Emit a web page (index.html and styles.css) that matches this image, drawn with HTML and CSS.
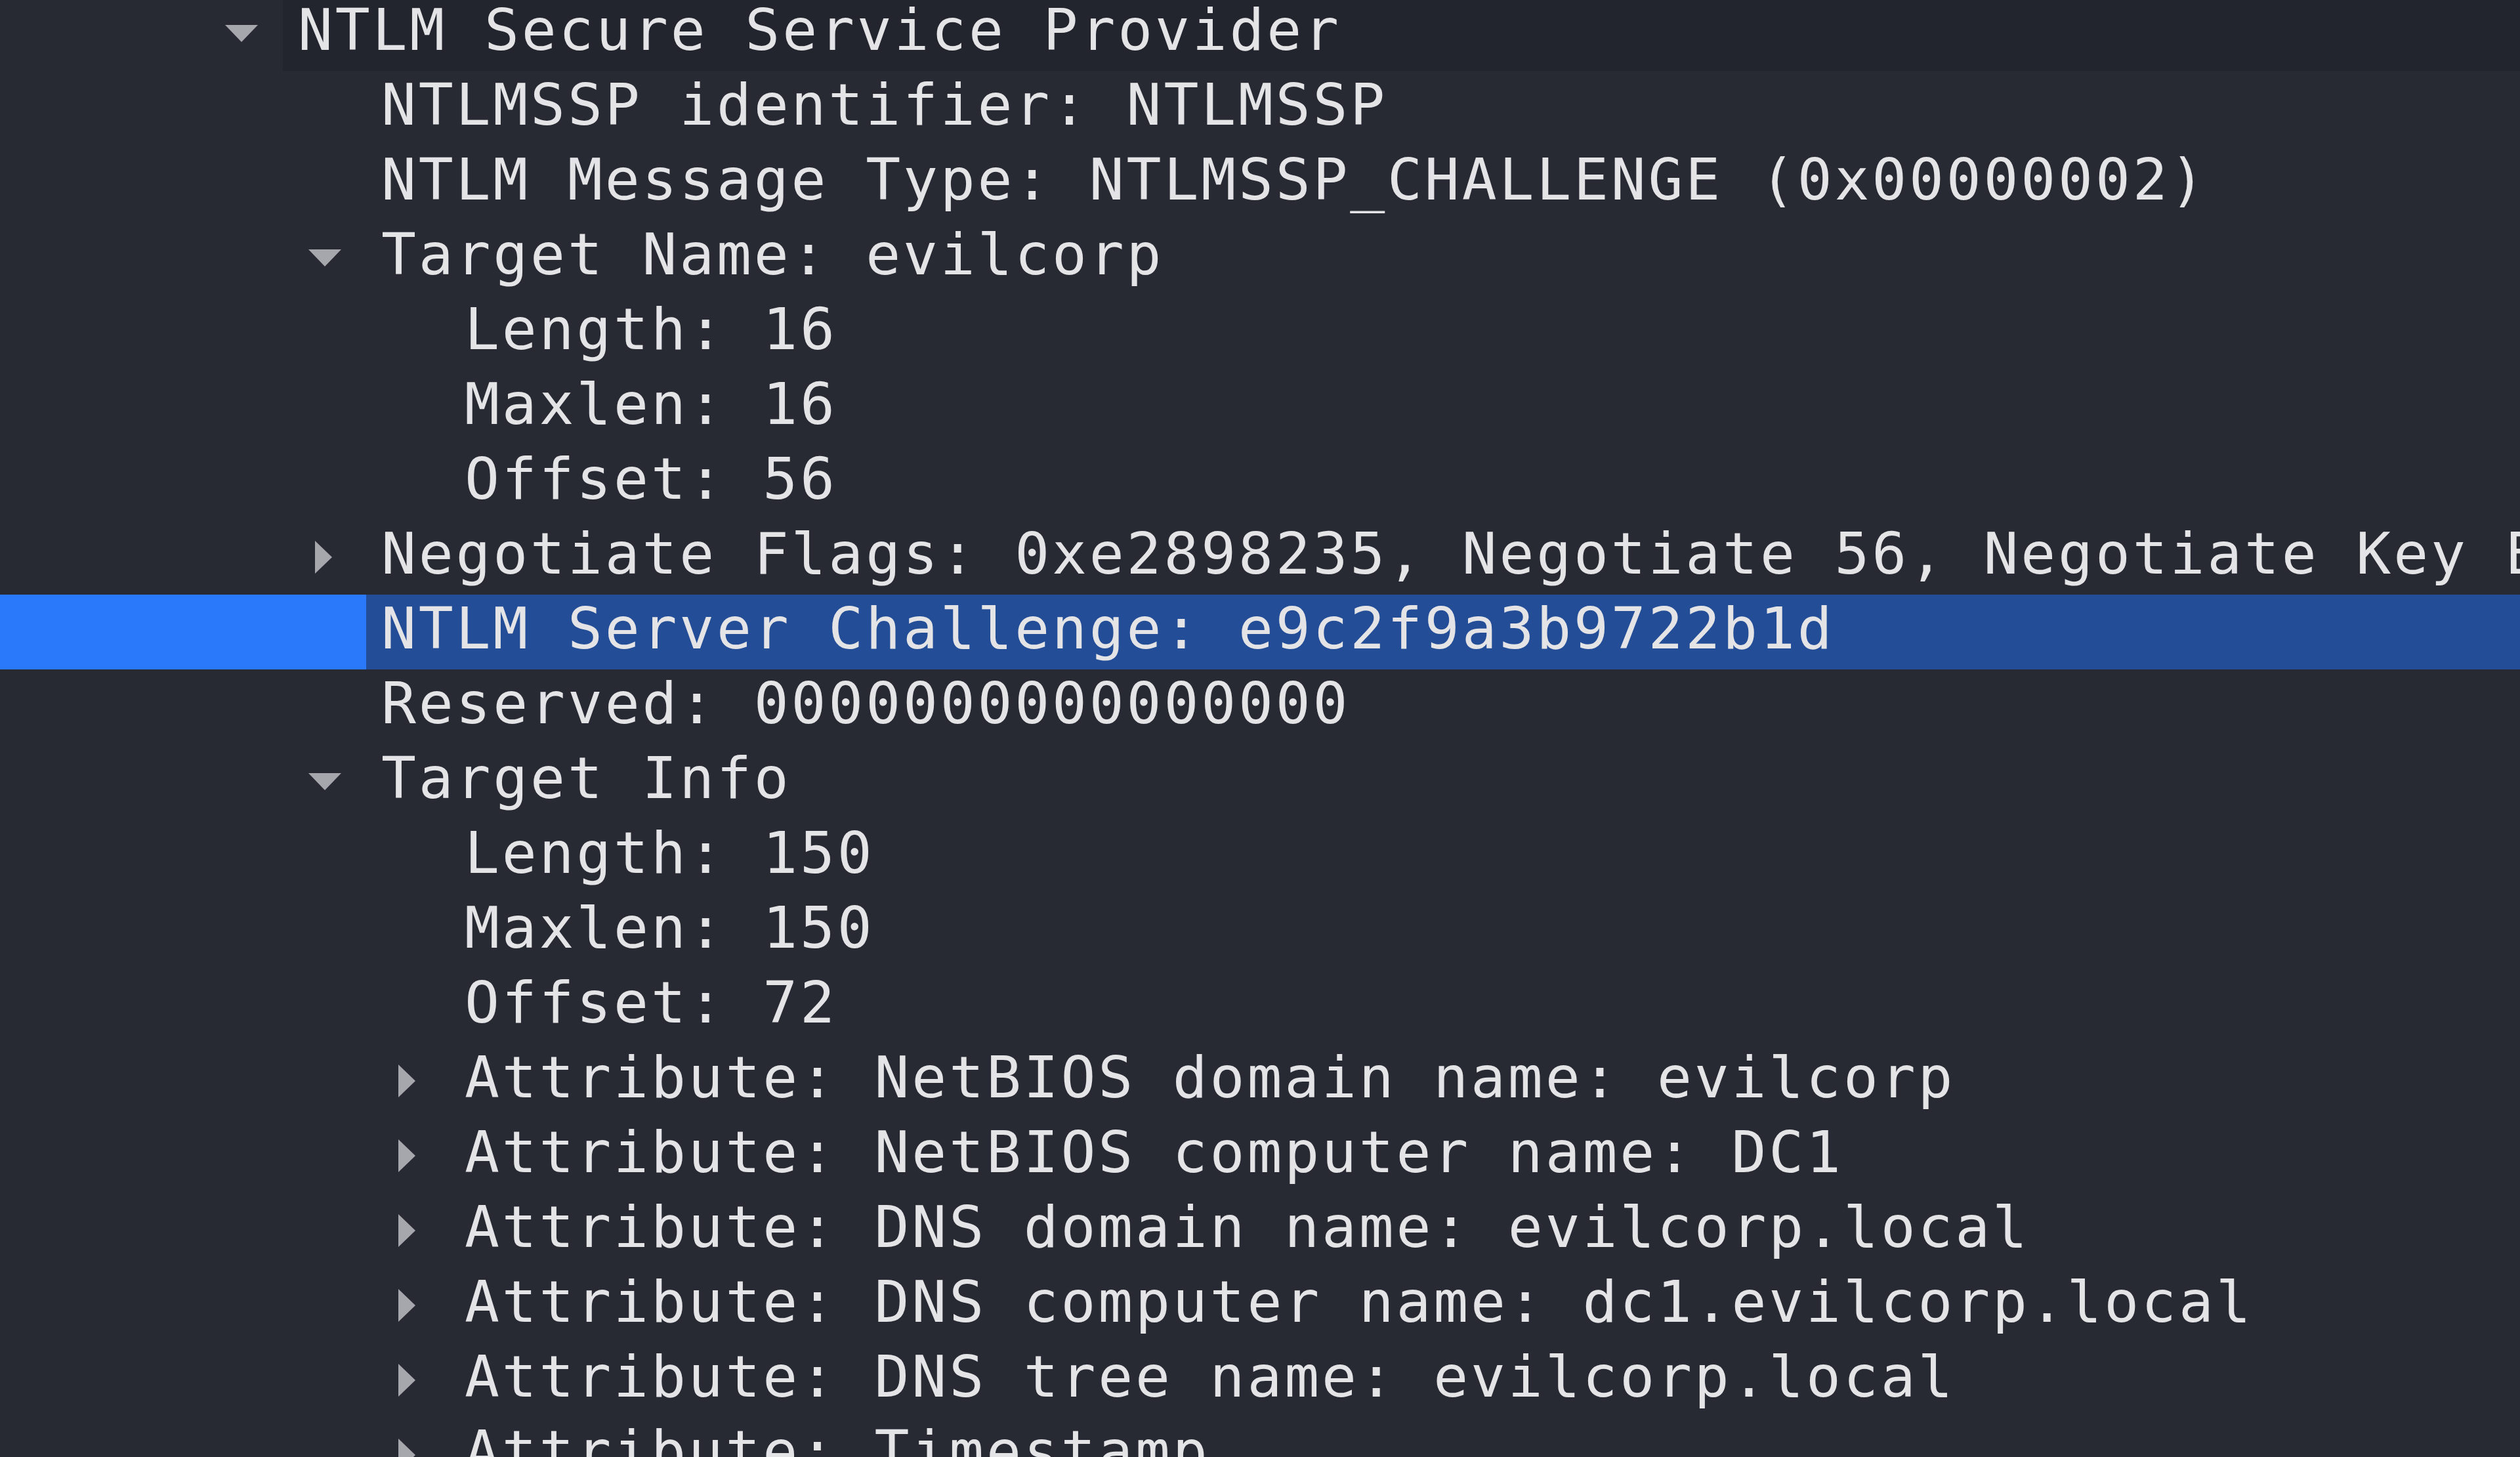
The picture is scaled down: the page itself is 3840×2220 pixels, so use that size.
FILE: index.html
```html
<!DOCTYPE html>
<html lang="en">
<head>
    <meta charset="UTF-8">
    <meta name="viewport" content="width=device-width, initial-scale=1.0">
    <title>Packet Details</title>
    <link rel="stylesheet" href="styles.css">
</head>
<body>
    <div class="tree">
        <div class="row level-0 current">
            <span class="indent"></span>
            <span class="branch"><svg class="arrow-down" viewBox="0 0 50 26"><polygon points="0,0 50,0 25,26"/></svg></span>
            <span class="label">NTLM Secure Service Provider</span>
        </div>
        <div class="row level-1">
            <span class="indent"></span>
            <span class="branch"></span>
            <span class="label">NTLMSSP identifier: NTLMSSP</span>
        </div>
        <div class="row level-1">
            <span class="indent"></span>
            <span class="branch"></span>
            <span class="label">NTLM Message Type: NTLMSSP_CHALLENGE (0x00000002)</span>
        </div>
        <div class="row level-1">
            <span class="indent"></span>
            <span class="branch"><svg class="arrow-down" viewBox="0 0 50 26"><polygon points="0,0 50,0 25,26"/></svg></span>
            <span class="label">Target Name: evilcorp</span>
        </div>
        <div class="row level-2">
            <span class="indent"></span>
            <span class="branch"></span>
            <span class="label">Length: 16</span>
        </div>
        <div class="row level-2">
            <span class="indent"></span>
            <span class="branch"></span>
            <span class="label">Maxlen: 16</span>
        </div>
        <div class="row level-2">
            <span class="indent"></span>
            <span class="branch"></span>
            <span class="label">Offset: 56</span>
        </div>
        <div class="row level-1">
            <span class="indent"></span>
            <span class="branch"><svg class="arrow-right" viewBox="0 0 26 50"><polygon points="0,0 26,25 0,50"/></svg></span>
            <span class="label">Negotiate Flags: 0xe2898235, Negotiate 56, Negotiate Key Exchange, Negotiate 128, Negotiate Version, Negotiate Target Info</span>
        </div>
        <div class="row level-1 selected">
            <span class="indent"></span>
            <span class="branch"></span>
            <span class="label">NTLM Server Challenge: e9c2f9a3b9722b1d</span>
        </div>
        <div class="row level-1">
            <span class="indent"></span>
            <span class="branch"></span>
            <span class="label">Reserved: 0000000000000000</span>
        </div>
        <div class="row level-1">
            <span class="indent"></span>
            <span class="branch"><svg class="arrow-down" viewBox="0 0 50 26"><polygon points="0,0 50,0 25,26"/></svg></span>
            <span class="label">Target Info</span>
        </div>
        <div class="row level-2">
            <span class="indent"></span>
            <span class="branch"></span>
            <span class="label">Length: 150</span>
        </div>
        <div class="row level-2">
            <span class="indent"></span>
            <span class="branch"></span>
            <span class="label">Maxlen: 150</span>
        </div>
        <div class="row level-2">
            <span class="indent"></span>
            <span class="branch"></span>
            <span class="label">Offset: 72</span>
        </div>
        <div class="row level-2">
            <span class="indent"></span>
            <span class="branch"><svg class="arrow-right" viewBox="0 0 26 50"><polygon points="0,0 26,25 0,50"/></svg></span>
            <span class="label">Attribute: NetBIOS domain name: evilcorp</span>
        </div>
        <div class="row level-2">
            <span class="indent"></span>
            <span class="branch"><svg class="arrow-right" viewBox="0 0 26 50"><polygon points="0,0 26,25 0,50"/></svg></span>
            <span class="label">Attribute: NetBIOS computer name: DC1</span>
        </div>
        <div class="row level-2">
            <span class="indent"></span>
            <span class="branch"><svg class="arrow-right" viewBox="0 0 26 50"><polygon points="0,0 26,25 0,50"/></svg></span>
            <span class="label">Attribute: DNS domain name: evilcorp.local</span>
        </div>
        <div class="row level-2">
            <span class="indent"></span>
            <span class="branch"><svg class="arrow-right" viewBox="0 0 26 50"><polygon points="0,0 26,25 0,50"/></svg></span>
            <span class="label">Attribute: DNS computer name: dc1.evilcorp.local</span>
        </div>
        <div class="row level-2">
            <span class="indent"></span>
            <span class="branch"><svg class="arrow-right" viewBox="0 0 26 50"><polygon points="0,0 26,25 0,50"/></svg></span>
            <span class="label">Attribute: DNS tree name: evilcorp.local</span>
        </div>
        <div class="row level-2">
            <span class="indent"></span>
            <span class="branch"><svg class="arrow-right" viewBox="0 0 26 50"><polygon points="0,0 26,25 0,50"/></svg></span>
            <span class="label">Attribute: Timestamp</span>
        </div>
    </div>
</body>
</html>
```

FILE: styles.css
```css
body {
    margin: 0;
    height: 100vh;
    overflow: hidden;
    background-color: #272933;
    color: #e4e4e6;
    font-family: "DejaVu Sans Mono", monospace;
    font-size: 88px;
    letter-spacing: 3.8px;
}
.tree {
    margin-top: -6px;
}
.row {
    display: flex;
    height: 114px;
}
.indent {
    flex: none;
}
.level-0 .indent {
    width: 304px;
}
.level-1 .indent {
    width: 431px;
}
.level-2 .indent {
    width: 558px;
}
.branch {
    flex: none;
    width: 127px;
    display: flex;
    align-items: center;
    justify-content: center;
}
.branch svg {
    fill: #a6a6ad;
}
.arrow-down {
    width: 50px;
    height: 26px;
}
.arrow-right {
    width: 26px;
    height: 50px;
    margin-left: -3px;
}
.label {
    flex: 1;
    min-width: 0;
    padding-left: 23px;
    line-height: 104px;
    white-space: pre;
    overflow: hidden;
}
.current .label {
    background-color: #22242e;
}
.selected .indent,
.selected .branch {
    background-color: #2a79fb;
}
.selected .label {
    background-color: #234d97;
}
```
